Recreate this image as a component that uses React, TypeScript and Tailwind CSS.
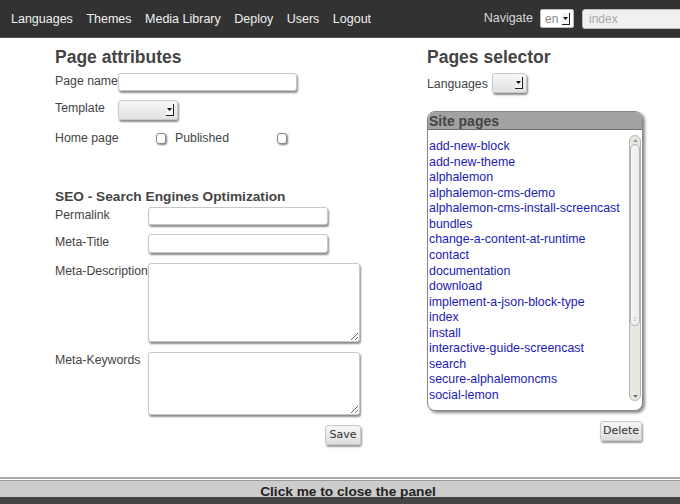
import React from 'react';

const PAGES = [
  'add-new-block',
  'add-new-theme',
  'alphalemon',
  'alphalemon-cms-demo',
  'alphalemon-cms-install-screencast',
  'bundles',
  'change-a-content-at-runtime',
  'contact',
  'documentation',
  'download',
  'implement-a-json-block-type',
  'index',
  'install',
  'interactive-guide-screencast',
  'search',
  'secure-alphalemoncms',
  'social-lemon',
];

const field = 'shrink-0 rounded-[3px] border border-[#c8c8c8] bg-white shadow-[1px_2px_2px_rgba(0,0,0,0.45)]';
const label = 'shrink-0 whitespace-nowrap leading-[15px] mt-[1px]';

const SelectBox: React.FC<{ w: string }> = ({ w }) => (
  <div className={`${w} h-[20px] shrink-0 flex items-center justify-end pr-[3px] rounded-[3px] border border-[#c8c8c8] bg-gradient-to-b from-[#f6f6f6] to-[#e2e2e2] shadow-[1px_2px_2px_rgba(0,0,0,0.45)]`}>
    <div className="w-[8px] h-[12px] bg-[#f4f4f4] border-r border-b border-[#222] flex items-center justify-center">
      <svg width="5" height="3" viewBox="0 0 5 3"><path d="M0 0h5L2.5 3z" fill="#111" /></svg>
    </div>
  </div>
);

const CheckBox = () => (
  <div className="w-[10px] h-[11px] mt-[3px] shrink-0 rounded-[3px] border border-[#8a8a8a] bg-white shadow-[1px_1px_2px_rgba(0,0,0,0.5)]" />
);

const Button: React.FC<{ label: string; w: string }> = ({ label, w }) => (
  <button className={`${w} h-[20px] self-end rounded-[3px] border border-[#c8c8c8] bg-gradient-to-b from-[#f7f7f7] to-[#dcdcdc] shadow-[1px_2px_2px_rgba(0,0,0,0.4)] text-[11px] text-[#333] font-['DejaVu_Sans',sans-serif]`}>
    {label}
  </button>
);

export default function App() {
  return (
    <div className="w-full h-[504px] flex flex-col bg-white font-['Liberation_Sans',Arial,sans-serif] text-[#444] overflow-hidden">
      {/* top bar */}
      <div className="h-[38px] shrink-0 flex items-center bg-[#323232] border-b border-[#555] pl-[11px]">
        <nav className="flex gap-[13.5px] pt-[2px] text-[12.5px] text-[#f0f0f0] whitespace-nowrap">
          <span>Languages</span>
          <span>Themes</span>
          <span>Media Library</span>
          <span>Deploy</span>
          <span>Users</span>
          <span>Logout</span>
        </nav>
        <div className="ml-auto flex items-center">
          <span className="text-[12.5px] text-[#d8d8d8] mr-[7px]">Navigate</span>
          <div className="w-[34px] h-[19px] flex items-center justify-between pl-[4px] pr-[3px] rounded-[2px] border border-[#bbb] bg-white">
            <span className="text-[12px] text-[#888]">en</span>
            <div className="w-[8px] h-[12px] bg-[#f4f4f4] border-r border-b border-[#222] flex items-center justify-center">
              <svg width="5" height="3" viewBox="0 0 5 3"><path d="M0 0h5L2.5 3z" fill="#111" /></svg>
            </div>
          </div>
          <div className="ml-[8px] w-[110px] h-[20px] -mr-[12px] flex items-center pl-[6px] rounded-[3px] border border-[#bbb] bg-[#f0f0f0] text-[12px] text-[#aaa]">
            index
          </div>
        </div>
      </div>

      {/* main */}
      <div className="flex-1 flex pt-[9px]">
        <div className="ml-[55px] w-[306px] shrink-0 flex flex-col text-[12.3px]">
          <h2 className="text-[17.5px] leading-[20px] font-bold text-[#444]">Page attributes</h2>
          <div className="mt-[6px] flex items-start">
            <span className={`w-[63px] ${label}`}>Page name</span>
            <div className={`w-[179px] h-[18px] ${field}`} />
          </div>
          <div className="mt-[9px] flex items-start">
            <span className={`w-[63px] ${label}`}>Template</span>
            <SelectBox w="w-[60px]" />
          </div>
          <div className="mt-[10px] flex items-start">
            <span className={`w-[101px] ${label}`}>Home page</span>
            <CheckBox />
            <span className={`ml-[9px] w-[102px] ${label}`}>Published</span>
            <CheckBox />
          </div>

          <h3 className="mt-[43px] text-[13.7px] leading-[16px] font-bold text-[#444] whitespace-nowrap">SEO - Search Engines Optimization</h3>
          <div className="mt-[2px] flex items-start">
            <span className={`w-[93px] ${label}`}>Permalink</span>
            <div className={`w-[180px] h-[18px] ${field}`} />
          </div>
          <div className="mt-[9px] flex items-start">
            <span className={`w-[93px] ${label}`}>Meta-Title</span>
            <div className={`w-[180px] h-[19px] ${field}`} />
          </div>
          <div className="mt-[10px] flex items-start">
            <span className={`w-[93px] ${label}`}>Meta-Description</span>
            <textarea className={`w-[212px] h-[79px] ${field} outline-none`} />
          </div>
          <div className="mt-[10px] flex items-start">
            <span className={`w-[93px] ${label}`}>Meta-Keywords</span>
            <textarea className={`w-[212px] h-[63px] ${field} outline-none`} />
          </div>
          <div className="mt-[10px] flex justify-end">
            <Button label="Save" w="w-[36px]" />
          </div>
        </div>

        <div className="ml-[66px] w-[216px] shrink-0 flex flex-col text-[12.3px]">
          <h2 className="text-[17.5px] leading-[20px] font-bold text-[#444]">Pages selector</h2>
          <div className="mt-[6px] flex items-center">
            <span className={`w-[65px] ${label} mt-[3px]`}>Languages</span>
            <SelectBox w="w-[35px]" />
          </div>
          <div className="mt-[18px] h-[300px] flex flex-col rounded-[8px] border border-[#888] bg-white shadow-[2px_2px_3px_rgba(0,0,0,0.45)] overflow-hidden">
            <div className="h-[18px] shrink-0 bg-[#a2a2a2] border-b border-[#6e6e6e] pl-[1px] text-[14px] leading-[18px] font-bold text-[#444]">
              Site pages
            </div>
            <div className="flex-1 flex">
              <ul className="flex-1 pl-[1px] pt-[9px] text-[12.4px] leading-[15.56px] text-[#1c1cb4] whitespace-nowrap">
                {PAGES.map((p) => (
                  <li key={p}>{p}</li>
                ))}
              </ul>
              <div className="w-[12px] mr-[1px] mt-[5px] mb-[9px] flex flex-col rounded-[6px] border border-[#b4b4b4] bg-[#e9e7e2]">
                <div className="h-[8px] flex items-center justify-center">
                  <svg width="5" height="3" viewBox="0 0 5 3"><path d="M0 3h5L2.5 0z" fill="#999" /></svg>
                </div>
                <div className="h-[182px] rounded-[5px] border border-[#b4b4b4] bg-gradient-to-r from-[#f7f7f7] to-[#ececec] flex items-end justify-center pb-[3px]">
                  <span className="text-[6px] leading-[6px] text-[#aaa]">≡</span>
                </div>
                <div className="flex-1" />
                <div className="h-[8px] flex items-center justify-center">
                  <svg width="5" height="3" viewBox="0 0 5 3"><path d="M0 0h5L2.5 3z" fill="#777" /></svg>
                </div>
              </div>
            </div>
          </div>
          <div className="mt-[10px] flex justify-end pr-[1px]">
            <Button label="Delete" w="w-[42px]" />
          </div>
        </div>
      </div>

      {/* bottom bar */}
      <div className="shrink-0 border-t-2 border-[#a8a8a8] bg-white pt-[1px]">
        <div className="h-[17px] border-t border-[#9a9a9a] bg-[#cccccc] pl-[16px] pt-[4px] flex items-center justify-center text-[13.7px] leading-[13px] font-bold text-[#222]">
          Click me to close the panel
        </div>
        <div className="h-[7px] bg-[#454545]" />
      </div>
    </div>
  );
}
